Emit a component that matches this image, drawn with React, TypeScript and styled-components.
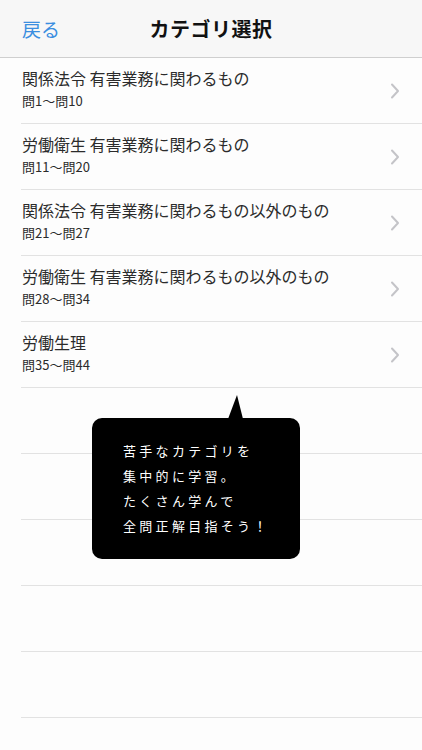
import styled, { createGlobalStyle } from 'styled-components'

const GlobalStyle = createGlobalStyle`
  html, body {
    margin: 0;
    padding: 0;
    background: #fdfdfd;
  }
  body {
    font-family: "Noto Sans CJK JP", "Noto Sans", sans-serif;
  }
`

const categories = [
  { title: '関係法令 有害業務に関わるもの', range: '問1〜問10' },
  { title: '労働衛生 有害業務に関わるもの', range: '問11〜問20' },
  { title: '関係法令 有害業務に関わるもの以外のもの', range: '問21〜問27' },
  { title: '労働衛生 有害業務に関わるもの以外のもの', range: '問28〜問34' },
  { title: '労働生理', range: '問35〜問44' },
]

const tips = ['苦手なカテゴリを', '集中的に学習。', 'たくさん学んで', '全問正解目指そう！']

export default function App() {
  return (
    <>
      <GlobalStyle />
      <Screen>
        <NavBar>
          <BackButton>戻る</BackButton>
          <NavTitle>カテゴリ選択</NavTitle>
        </NavBar>
        <List>
          {categories.map((c) => (
            <Row key={c.title}>
              <RowText>
                <RowTitle>{c.title}</RowTitle>
                <RowSub>{c.range}</RowSub>
              </RowText>
              <Chevron width="10" height="16" viewBox="0 0 10 16">
                <path d="M2 1.5 L8 8 L2 14.5" fill="none" stroke="#c4c4c8" strokeWidth="2" strokeLinecap="round" strokeLinejoin="round" />
              </Chevron>
            </Row>
          ))}
          {[0, 1, 2, 3, 4].map((i) => (
            <Row key={i} />
          ))}
          <Bubble>
            {tips.map((t) => (
              <BubbleLine key={t}>{t}</BubbleLine>
            ))}
          </Bubble>
        </List>
      </Screen>
    </>
  )
}

const Screen = styled.div`
  width: 422px;
  height: 750px;
  overflow: hidden;
  background: #fdfdfd;
`

const NavBar = styled.header`
  position: relative;
  display: flex;
  align-items: center;
  justify-content: center;
  height: 57px;
  background: #f7f7f7;
  border-bottom: 1px solid #cfcfcf;
`

const BackButton = styled.span`
  position: absolute;
  left: 22px;
  top: 50%;
  transform: translateY(-52%);
  font-size: 19px;
  color: #3b8ee0;
`

const NavTitle = styled.h1`
  margin: 0;
  font-size: 20px;
  font-weight: 700;
  color: #111;
  letter-spacing: 0.5px;
`

const List = styled.div`
  position: relative;
`

const Row = styled.div`
  display: flex;
  align-items: center;
  height: 65px;
  margin-left: 21px;
  padding-right: 22px;
  border-bottom: 1px solid #e2e2e2;
`

const RowText = styled.div`
  flex: 1;
  display: flex;
  flex-direction: column;
  padding: 0 0 2px 1px;
`

const RowTitle = styled.span`
  font-size: 16px;
  line-height: 20px;
  color: #2b2b2b;
`

const RowSub = styled.span`
  margin-top: 3px;
  font-size: 13px;
  line-height: 20px;
  color: #2b2b2b;
`

const Chevron = styled.svg`
  flex-shrink: 0;
`

const Bubble = styled.div`
  position: absolute;
  left: 92px;
  top: 360px;
  width: 208px;
  height: 141px;
  box-sizing: border-box;
  padding: 20px 0 0 31px;
  background: #000;
  border-radius: 10px;
  display: flex;
  flex-direction: column;

  &::before {
    content: '';
    position: absolute;
    left: 136px;
    top: -23px;
    width: 0;
    height: 0;
    border-left: 9px solid transparent;
    border-right: 6px solid transparent;
    border-bottom: 24px solid #000;
  }
`

const BubbleLine = styled.span`
  font-size: 13px;
  line-height: 25px;
  letter-spacing: 3.3px;
  color: #fff;
  font-weight: 400;
`
